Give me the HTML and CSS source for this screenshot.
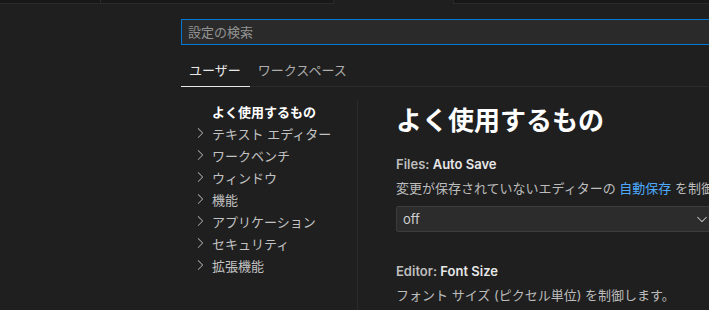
FILE: index.html
```html
<!DOCTYPE html>
<html lang="ja">
<head>
  <meta charset="UTF-8">
  <meta name="viewport" content="width=device-width, initial-scale=1.0">
  <title>設定</title>
  <link rel="stylesheet" href="styles.css">
</head>
<body>
  <div class="strip">
    <div class="strip-box first"></div>
    <div class="strip-box second"></div>
    <div class="strip-gap"></div>
    <div class="strip-box third"></div>
  </div>

  <div class="settings">
    <input class="search" type="text" placeholder="設定の検索">

    <div class="scope-tabs">
      <div class="scope-tab active">ユーザー</div>
      <div class="scope-tab">ワークスペース</div>
    </div>

    <div class="settings-body">
      <div class="toc">
        <div class="toc-item selected">よく使用するもの</div>
        <div class="toc-item"><svg class="chev" viewBox="0 0 16 16"><path d="M10.072 8.024L5.715 3.667l.618-.62L11 7.716v.618L6.333 13l-.618-.619 4.357-4.357z"/></svg>テキスト エディター</div>
        <div class="toc-item"><svg class="chev" viewBox="0 0 16 16"><path d="M10.072 8.024L5.715 3.667l.618-.62L11 7.716v.618L6.333 13l-.618-.619 4.357-4.357z"/></svg>ワークベンチ</div>
        <div class="toc-item"><svg class="chev" viewBox="0 0 16 16"><path d="M10.072 8.024L5.715 3.667l.618-.62L11 7.716v.618L6.333 13l-.618-.619 4.357-4.357z"/></svg>ウィンドウ</div>
        <div class="toc-item"><svg class="chev" viewBox="0 0 16 16"><path d="M10.072 8.024L5.715 3.667l.618-.62L11 7.716v.618L6.333 13l-.618-.619 4.357-4.357z"/></svg>機能</div>
        <div class="toc-item"><svg class="chev" viewBox="0 0 16 16"><path d="M10.072 8.024L5.715 3.667l.618-.62L11 7.716v.618L6.333 13l-.618-.619 4.357-4.357z"/></svg>アプリケーション</div>
        <div class="toc-item"><svg class="chev" viewBox="0 0 16 16"><path d="M10.072 8.024L5.715 3.667l.618-.62L11 7.716v.618L6.333 13l-.618-.619 4.357-4.357z"/></svg>セキュリティ</div>
        <div class="toc-item"><svg class="chev" viewBox="0 0 16 16"><path d="M10.072 8.024L5.715 3.667l.618-.62L11 7.716v.618L6.333 13l-.618-.619 4.357-4.357z"/></svg>拡張機能</div>
      </div>

      <div class="content">
        <h1 class="group-title">よく使用するもの</h1>

        <div class="setting">
          <div class="setting-title"><span class="category">Files: </span>Auto Save</div>
          <div class="setting-desc">変更が保存されていないエディターの <a class="link">自動保存</a> を制御します。</div>
          <div class="select">
            <span>off</span>
            <svg class="chev-down" viewBox="0 0 16 16"><path d="M7.976 10.072l4.357-4.357.62.618L8.284 11h-.618L3 6.333l.619-.618 4.357 4.357z"/></svg>
          </div>
        </div>

        <div class="setting second">
          <div class="setting-title"><span class="category">Editor: </span>Font Size</div>
          <div class="setting-desc">フォント サイズ (ピクセル単位) を制御します。</div>
        </div>
      </div>
    </div>
  </div>
</body>
</html>
```

FILE: styles.css
```css
body {
  margin: 0;
  background-color: #1f1f1f;
  color: #cccccc;
  font-family: "Inter", "Noto Sans CJK JP", sans-serif;
  font-size: 13px;
  overflow: hidden;
  width: 709px;
  height: 310px;
}

.strip {
  display: flex;
  height: 4px;
}

.strip-box {
  background-color: #181818;
  border-bottom: 1px solid #2b2b2b;
  height: 3px;
}

.strip-box.first {
  width: 100px;
  border-right: 1px solid #2b2b2b;
}

.strip-box.second {
  width: 232px;
  border-right: 1px solid #2b2b2b;
}

.strip-gap {
  width: 119px;
}

.strip-box.third {
  flex: 1;
  border-left: 1px solid #2b2b2b;
}

.settings {
  padding-left: 181px;
}

.search {
  display: block;
  box-sizing: border-box;
  margin: 15px 0 0 0;
  width: 600px;
  height: 26px;
  padding: 0 6px;
  border: 1px solid #0078d4;
  background-color: #2a2a2a;
  color: #cccccc;
  font-family: "Inter", "Noto Sans CJK JP", sans-serif;
  font-size: 13px;
  outline: none;
}

.search::placeholder {
  color: #939393;
}

.scope-tabs {
  display: flex;
  margin-top: 14px;
  border-bottom: 1px solid #2b2b2b;
}

.scope-tab {
  line-height: 22px;
  padding: 0 9px 5px 8px;
  margin-bottom: -1px;
  color: #adadad;
  border-bottom: 1px solid transparent;
}

.scope-tab.active {
  color: #e7e7e7;
  border-bottom-color: #e7e7e7;
}

.settings-body {
  display: flex;
  margin-top: 13px;
}

.toc {
  width: 176px;
  flex-shrink: 0;
  border-right: 1px solid #2b2b2b;
  height: 210px;
}

.toc-item {
  display: flex;
  align-items: center;
  height: 22px;
  padding-left: 11px;
  color: #c2c2c2;
}

.toc-item.selected {
  padding-left: 31px;
  color: #ffffff;
  font-weight: 700;
}

.chev {
  width: 16px;
  height: 16px;
  margin-right: 4px;
  fill: #a8a8a8;
}

.content {
  padding-left: 38px;
  flex-shrink: 0;
}

.group-title {
  margin: 5px 0 0 0;
  font-size: 26px;
  line-height: 32px;
  font-weight: 700;
  color: #ffffff;
}

.setting {
  margin-top: 18px;
}

.setting.second {
  margin-top: 30px;
}

.setting-title {
  line-height: 18px;
  font-weight: 600;
  color: #e7e7e7;
}

.category {
  color: #bdbdbd;
}

.setting-desc {
  margin-top: 6px;
  line-height: 18px;
  color: #bcbcbc;
}

.link {
  color: #4daafc;
}

.select {
  display: flex;
  align-items: center;
  justify-content: space-between;
  box-sizing: border-box;
  margin-top: 9px;
  width: 330px;
  height: 26px;
  padding: 0 15px 0 6px;
  background-color: #2c2c2c;
  border: 1px solid #3c3c3c;
  border-radius: 2px;
  color: #d0d0d0;
}

.chev-down {
  width: 16px;
  height: 16px;
  fill: #cccccc;
}
```
